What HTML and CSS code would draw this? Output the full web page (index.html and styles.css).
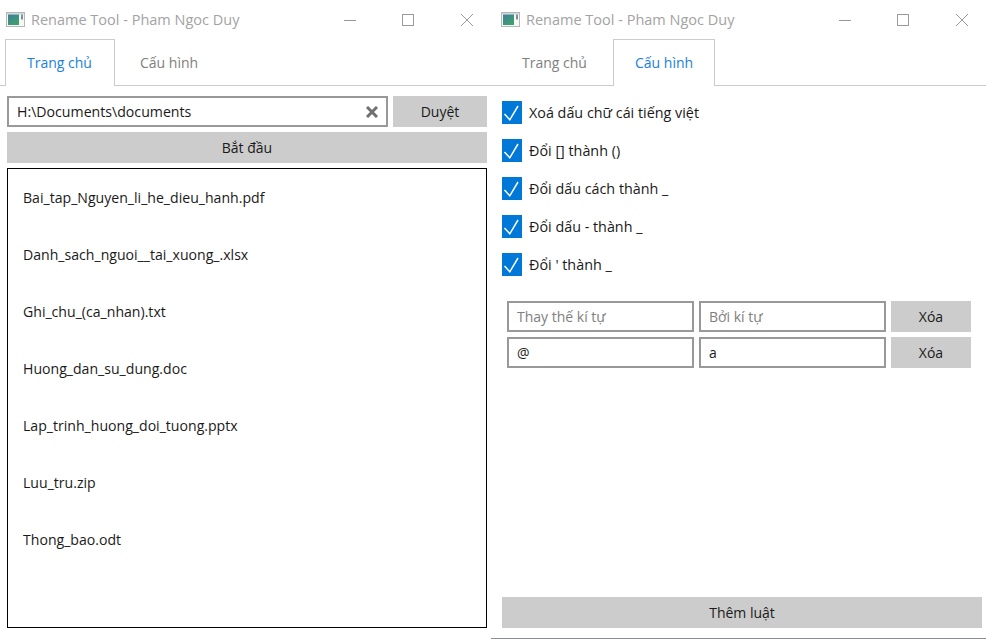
FILE: index.html
```html
<!DOCTYPE html>
<html>
<head>
  <title>Rename Tool</title>
  <meta name="viewport" content="width=device-width, initial-scale=1">
  <link rel="stylesheet" href="styles.css">
</head>
<body>
  <svg class="defs" width="0" height="0">
    <defs>
      <linearGradient id="appFill" x1="0" y1="0" x2="0.6" y2="1">
        <stop offset="0" stop-color="#3f7d9c"/>
        <stop offset="1" stop-color="#3fa06c"/>
      </linearGradient>
      <symbol id="appIcon" viewBox="0 0 19 15">
        <rect x="0.5" y="0.5" width="18" height="14" fill="#f6f7f7" stroke="#b4b7b7"/>
        <rect x="1" y="1" width="17" height="1.5" fill="#d4d6d6"/>
        <rect x="2" y="2.5" width="11" height="10.5" fill="url(#appFill)"/>
        <rect x="15" y="2.5" width="2" height="5" fill="#7d8f96"/>
      </symbol>
      <symbol id="tick" viewBox="0 0 20 23">
        <path d="M2.5 13 L7.8 18.8 L16 5" fill="none" stroke="#fff" stroke-width="1.5"/>
      </symbol>
      <symbol id="winMin" viewBox="0 0 12 12"><path d="M0 6.5H12" stroke="#9a9a9a" fill="none"/></symbol>
      <symbol id="winMax" viewBox="0 0 12 12"><rect x="0.5" y="0.5" width="11" height="11" stroke="#9a9a9a" fill="none"/></symbol>
      <symbol id="winClose" viewBox="0 0 12 12"><path d="M0 0L12 12M12 0L0 12" stroke="#9a9a9a" fill="none"/></symbol>
    </defs>
  </svg>

  <div class="desktop">
    <div class="window window-left">
      <div class="titlebar">
        <svg class="app-icon"><use href="#appIcon"/></svg>
        <span class="title">Rename Tool - Pham Ngoc Duy</span>
        <div class="win-buttons">
          <svg class="win-btn"><use href="#winMin"/></svg>
          <svg class="win-btn"><use href="#winMax"/></svg>
          <svg class="win-btn win-close"><use href="#winClose"/></svg>
        </div>
      </div>
      <div class="tabs">
        <div class="tab active">Trang chủ</div>
        <div class="tab tab-second">Cấu hình</div>
      </div>
      <div class="home">
        <div class="path-row">
          <div class="path-box">
            <input class="path-input" type="text" value="H:\Documents\documents">
            <svg class="clear" viewBox="0 0 12 12"><path d="M1 1L11 11M11 1L1 11" stroke="#707070" stroke-width="3" fill="none"/></svg>
          </div>
          <button class="btn browse">Duyệt</button>
        </div>
        <button class="btn start">Bắt đầu</button>
        <div class="file-list">
          <div class="file">Bai_tap_Nguyen_li_he_dieu_hanh.pdf</div>
          <div class="file">Danh_sach_nguoi__tai_xuong_.xlsx</div>
          <div class="file">Ghi_chu_(ca_nhan).txt</div>
          <div class="file">Huong_dan_su_dung.doc</div>
          <div class="file">Lap_trinh_huong_doi_tuong.pptx</div>
          <div class="file">Luu_tru.zip</div>
          <div class="file">Thong_bao.odt</div>
        </div>
      </div>
    </div>

    <div class="window window-right">
      <div class="titlebar">
        <svg class="app-icon"><use href="#appIcon"/></svg>
        <span class="title">Rename Tool - Pham Ngoc Duy</span>
        <div class="win-buttons">
          <svg class="win-btn"><use href="#winMin"/></svg>
          <svg class="win-btn"><use href="#winMax"/></svg>
          <svg class="win-btn win-close"><use href="#winClose"/></svg>
        </div>
      </div>
      <div class="tabs">
        <div class="tab tab-first">Trang chủ</div>
        <div class="tab tab-second active">Cấu hình</div>
      </div>
      <div class="config">
        <div class="checks">
          <div class="check"><svg class="box"><use href="#tick"/></svg>Xoá dấu chữ cái tiếng việt</div>
          <div class="check"><svg class="box"><use href="#tick"/></svg>Đổi [] thành ()</div>
          <div class="check"><svg class="box"><use href="#tick"/></svg>Đổi dấu cách thành _</div>
          <div class="check"><svg class="box"><use href="#tick"/></svg>Đổi dấu - thành _</div>
          <div class="check"><svg class="box"><use href="#tick"/></svg>Đổi ' thành _</div>
        </div>
        <div class="rules">
          <div class="rule">
            <input class="rule-input" type="text" placeholder="Thay thế kí tự">
            <input class="rule-input" type="text" placeholder="Bởi kí tự">
            <button class="btn rule-del">Xóa</button>
          </div>
          <div class="rule">
            <input class="rule-input" type="text" value="@">
            <input class="rule-input" type="text" value="a">
            <button class="btn rule-del">Xóa</button>
          </div>
        </div>
        <button class="btn add">Thêm luật</button>
      </div>
    </div>
  </div>
</body>
</html>
```

FILE: styles.css
```css
html, body {
  margin: 0;
  height: 639px;
  overflow: hidden;
  background-color: #fff;
}
body {
  font-family: "Open Sans", "Noto Sans", sans-serif;
  font-size: 14px;
  color: #1a1a1a;
}
.defs {
  display: block;
  height: 0;
}
.desktop {
  display: flex;
  height: 639px;
}
.window {
  box-sizing: border-box;
  height: 639px;
  display: flex;
  flex-direction: column;
}
.window-left {
  width: 491px;
}
.window-right {
  width: 495px;
  border-bottom: 1px solid #8a8f94;
}

/* title bar */
.titlebar {
  height: 39px;
  display: flex;
  align-items: center;
  flex-shrink: 0;
  padding-left: 6px;
}
.window-right .titlebar {
  padding-left: 10px;
}
.app-icon {
  width: 19px;
  height: 15px;
  margin-top: -1px;
}
.title {
  margin-left: 6px;
  color: #a3a3a3;
  font-size: 14.5px;
}
.win-buttons {
  margin-left: auto;
  display: flex;
  gap: 46px;
  padding-right: 18px;
}
.win-btn {
  width: 12px;
  height: 12px;
}
.win-close {
  margin-left: 1px;
}

/* tabs */
.tabs {
  height: 47px;
  box-sizing: border-box;
  display: flex;
  padding-left: 5px;
  border-bottom: 1px solid #ccc;
  flex-shrink: 0;
}
.window-right .tabs {
  padding-left: 9px;
}
.tab {
  box-sizing: border-box;
  width: 110px;
  height: 47px;
  padding-left: 21px;
  line-height: 46px;
  color: #808080;
  border: 1px solid transparent;
  border-bottom: none;
}
.tab-first {
  width: 113px;
}
.tab-second {
  width: 102px;
}
.window-left .tab-second {
  padding-left: 24px;
}
.tab.active {
  color: #1a7fe0;
  background-color: #fff;
  border-color: #ccc;
}

/* buttons and inputs */
.btn {
  border: none;
  background-color: #ccc;
  font-family: inherit;
  font-size: 14px;
  color: #1a1a1a;
  padding: 0;
  height: 31px;
}
input {
  font-family: inherit;
  font-size: 14px;
  color: #1a1a1a;
  outline: none;
}
input::placeholder {
  color: #808080;
  opacity: 1;
}

/* home tab */
.home {
  padding: 10px 4px 0 7px;
  display: flex;
  flex-direction: column;
  gap: 5px;
}
.path-row {
  display: flex;
  gap: 5px;
}
.path-box {
  box-sizing: border-box;
  width: 381px;
  height: 31px;
  border: 2px solid #999;
  display: flex;
  align-items: center;
  padding-right: 8px;
}
.path-input {
  flex: 1;
  min-width: 0;
  border: none;
  padding: 0 0 0 8px;
  font-size: 14.15px;
}
.clear {
  width: 12px;
  height: 12px;
}
.browse {
  width: 94px;
}
.start {
  width: 480px;
}
.file-list {
  box-sizing: border-box;
  width: 480px;
  height: 460px;
  border: 1px solid #000;
  padding: 0 15px;
}
.file {
  height: 57px;
  line-height: 57px;
  font-size: 14.1px;
}

/* config tab */
.config {
  flex: 1;
  display: flex;
  flex-direction: column;
  padding: 15px 4px 10px 11px;
}
.checks {
  display: flex;
  flex-direction: column;
  gap: 15px;
}
.check {
  display: flex;
  align-items: center;
  height: 23px;
  font-size: 14.35px;
}
.box {
  width: 20px;
  height: 23px;
  background-color: #0078d7;
  margin-right: 7px;
}
.rules {
  display: flex;
  flex-direction: column;
  gap: 5px;
  margin-top: 25px;
  padding-left: 5px;
}
.rule {
  display: flex;
  gap: 5px;
}
.rule-input {
  box-sizing: border-box;
  width: 187px;
  height: 31px;
  border: 2px solid #999;
  padding: 0 8px;
}
.rule-del {
  width: 80px;
}
.add {
  width: 480px;
  margin-top: auto;
}
```
